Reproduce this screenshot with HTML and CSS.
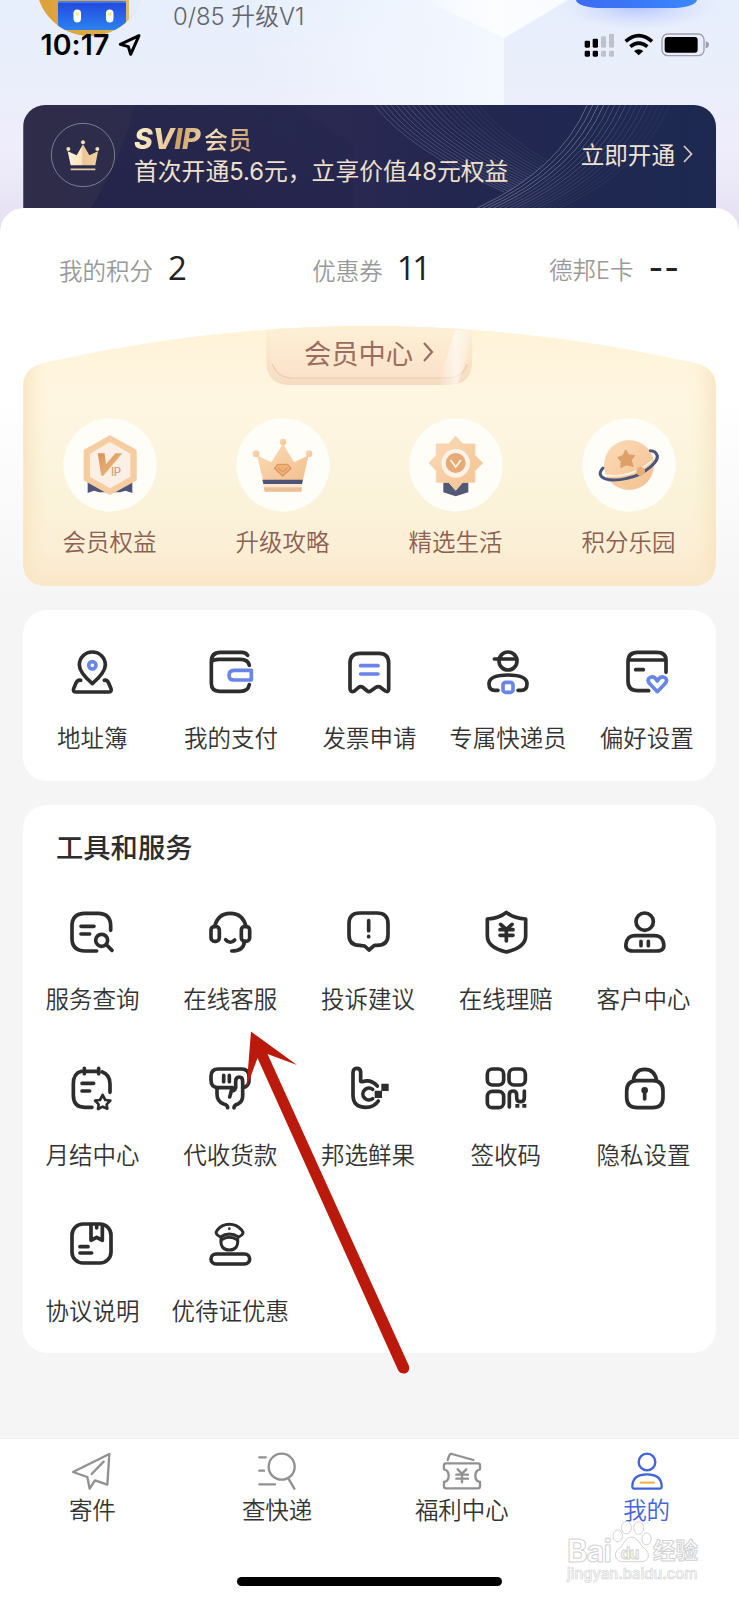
FILE: index.html
```html
<!DOCTYPE html>
<html lang="zh-CN">
<head>
<meta charset="utf-8">
<title>我的</title>
<link rel="stylesheet" href="styles.css">
</head>
<body>
<div class="page">
  <header class="header">
    <svg class="facets" viewBox="0 0 739 232" preserveAspectRatio="none">
      <defs>
        <linearGradient id="sky" x1="0" y1="0" x2="0" y2="1"><stop offset="0" stop-color="#e7effc"/><stop offset=".4" stop-color="#ebeefb"/><stop offset=".65" stop-color="#efedfb"/><stop offset="1" stop-color="#e4dff2"/></linearGradient>
        <linearGradient id="lightLeft" x1="0" y1="0" x2="1" y2="0"><stop offset="0" stop-color="#f4f8ff" stop-opacity="0"/><stop offset="1" stop-color="#f4f8ff"/></linearGradient>
        <linearGradient id="lightTop" x1="0" y1="0" x2="1" y2="0"><stop offset="0" stop-color="#fff" stop-opacity=".1"/><stop offset=".5" stop-color="#fcfdff"/><stop offset="1" stop-color="#f8fbff"/></linearGradient>
        <radialGradient id="glow"><stop offset="0" stop-color="#9db4ff" stop-opacity=".75"/><stop offset="1" stop-color="#c5ccff" stop-opacity="0"/></radialGradient>
      </defs>
      <path fill="url(#sky)" d="M0 0H739V232H0Z"/>
      <path fill="url(#lightLeft)" d="M250 0H504V110H250Z"/>
      <path fill="url(#lightTop)" d="M425 0H568L504 38Z"/>
      <ellipse cx="638" cy="6" rx="78" ry="24" fill="url(#glow)"/>
    </svg>
    <div class="profile">
      <svg class="avatar" width="108" height="36" viewBox="36 0 108 36">
        <defs>
          <clipPath id="round"><circle cx="90" cy="-18" r="54"/></clipPath>
          <linearGradient id="robot" x1="0" y1="0" x2="0" y2="1"><stop offset="0" stop-color="#2446df"/><stop offset="1" stop-color="#2d82ee"/></linearGradient>
          <linearGradient id="gold" x1="0" y1="0" x2="1" y2="0"><stop offset="0" stop-color="#dfa038"/><stop offset=".75" stop-color="#d8b04c"/><stop offset=".9" stop-color="#dfc178"/><stop offset="1" stop-color="#e5ebf5"/></linearGradient>
        </defs>
        <g clip-path="url(#round)">
          <path fill="url(#gold)" d="M36 0H144V36H36Z"/>
          <path fill="#e6ebf4" d="M129 0H144V26H129Z"/>
          <rect x="58" y="1" width="68" height="29" rx="2" fill="url(#robot)"/>
          <path stroke="#4d8cf5" stroke-width="1.5" d="M58 2H126"/>
          <rect x="73.500" y="9.500" width="7.500" height="13" rx="3.700" fill="#fff"/><rect x="106" y="9.500" width="7.500" height="13" rx="3.700" fill="#fff"/>
          <circle cx="77.500" cy="14" r="2" fill="#ffe98f"/><circle cx="110" cy="14" r="2" fill="#ffe98f"/>
        </g>
      </svg>
      <span class="level">0/85 升级V1</span>
      <span class="sign"></span>
    </div>
    <div class="statusbar">
      <span class="time">10:17</span>
      <svg class="loc" width="24" height="24" viewBox="354 97 72 72"><path d="M417 105L361 131L385 138L392 161Z" fill="none" stroke="#000" stroke-width="9" stroke-linejoin="round"/></svg>
      <svg class="signals" width="127" height="26" viewBox="642 94 381 78">
        <g><rect x="647" y="120" width="16" height="21" rx="4"/><rect x="671" y="114" width="16" height="27" rx="4"/><rect x="647" y="150" width="16" height="18" rx="4"/><rect x="671" y="150" width="16" height="18" rx="4"/></g>
        <g fill="#bfc2ca"><rect x="696" y="107" width="15" height="34" rx="4"/><rect x="720" y="99" width="15" height="42" rx="4"/><rect x="696" y="150" width="15" height="18" rx="4"/><rect x="720" y="150" width="15" height="18" rx="4"/></g>
        <g fill="none" stroke="#000" stroke-width="11"><path d="M770 122Q809 88 849 122"/><path d="M784 138Q809 117 835 138"/></g><path d="M795 151Q809 141 823 151L809 164Z"/>
        <rect x="879" y="100" width="126" height="65" rx="17" fill="none" stroke="#9da0aa" stroke-width="4"/><rect x="887" y="109" width="99" height="47" rx="9"/><path fill="#9da0aa" d="M1010 122Q1020 124 1020 132T1010 143Z"/>
      </svg>
    </div>
    <div class="banner">
      <svg class="banner-bg" viewBox="0 0 692.500 103">
        <defs>
          <linearGradient id="navy" x1="0" y1="0" x2="1" y2="0"><stop offset="0" stop-color="#2f2d49"/><stop offset=".5" stop-color="#282852"/><stop offset=".62" stop-color="#232750"/><stop offset="1" stop-color="#1d2951"/></linearGradient>
          <linearGradient id="shade" x1="0" y1="1" x2="1" y2="0"><stop offset="0" stop-color="#22224a" stop-opacity=".8"/><stop offset="1" stop-color="#24264f" stop-opacity=".4"/></linearGradient>
          <clipPath id="leftOf"><path d="M0 0H564Q536 65 454 103H0Z"/></clipPath>
          <path id="a" d="M351 0Q386 45 481 87" stroke-width="1" fill="none" stroke="#6f7796"/>
          <g id="a4"><use href="#a"/><use href="#a" x="5.500"/><use href="#a" x="11"/><use href="#a" x="16.500"/></g>
          <path id="b" d="M454 103Q536 65 564 0" stroke-width="1" fill="none" stroke="#7f88a3"/>
          <g id="b4"><use href="#b"/><use href="#b" x="5.500"/><use href="#b" x="11"/><use href="#b" x="16.500"/></g>
        </defs>
        <path fill="url(#navy)" d="M0 0H693V103H0Z"/>
        <path fill="url(#shade)" d="M68 103Q105 40 110 0H270L330 40V103Z"/>
        <g clip-path="url(#leftOf)"><use href="#a4" opacity=".5"/><use href="#a4" x="22" opacity=".5"/><use href="#a4" x="44" opacity=".42"/><use href="#a4" x="66" opacity=".32"/><use href="#a4" x="88" opacity=".2"/></g>
        <use href="#b4" opacity=".65"/><use href="#b4" x="22" opacity=".4"/><use href="#b4" x="44" opacity=".25"/><use href="#b4" x="66" opacity=".12"/>
      </svg>
      <svg class="medal" width="66" height="66" viewBox="150 370 198 198">
        <defs><linearGradient id="crownGold" x1="0" y1="0" x2="1" y2="0"><stop offset="0" stop-color="#fff1d8"/><stop offset=".45" stop-color="#fbe4c0"/><stop offset=".5" stop-color="#edc594"/><stop offset="1" stop-color="#f3d1a2"/></linearGradient></defs>
        <circle cx="249" cy="469" r="95" fill="#2d2d4b" stroke="#8b8ca0" stroke-width="2.500"/>
        <path fill="url(#crownGold)" d="M212 500L203 458L230 470L249 437L268 470L294 458L286 500Z"/>
        <g fill="#f6ddba"><circle cx="249" cy="431" r="6"/><circle cx="205" cy="451" r="6"/><circle cx="292" cy="451" r="6"/></g>
        <path stroke="#e6c9a4" stroke-width="5" d="M212 512H286"/>
      </svg>
      <div class="offer">
        <div class="offer-title"><b class="svip">SVIP</b><span class="member">会员</span></div>
        <div class="offer-text">首次开通5.6元，立享价值48元权益</div>
      </div>
      <div class="open">立即开通<svg width="12" height="20" viewBox="0 0 12 20"><path d="M2 2L9.500 10L2 18" fill="none" stroke="#d9cdc4" stroke-width="1.700"/></svg></div>
    </div>
  </header>

  <main class="sheet">
    <div class="stats">
      <div class="stat"><span>我的积分</span><b>2</b></div>
      <div class="stat coupons"><span>优惠券</span><b>11</b></div>
      <div class="stat"><span>德邦E卡</span><b class="dash">--</b></div>
    </div>

    <section class="vip">
      <svg class="vip-bg" viewBox="0 0 692.500 260">
        <defs>
          <linearGradient id="cream" x1="0" y1="0" x2="0" y2="1"><stop offset="0" stop-color="#fff3d8"/><stop offset=".3" stop-color="#fff6e2"/><stop offset=".65" stop-color="#faf3da"/><stop offset=".85" stop-color="#fbefd6"/><stop offset="1" stop-color="#fae6c8"/></linearGradient>
          <linearGradient id="edge" x1="0" y1="0" x2="1" y2="0"><stop offset="0" stop-color="#f8e5c2" stop-opacity=".9"/><stop offset=".035" stop-color="#fbeccd" stop-opacity="0"/><stop offset=".965" stop-color="#fbeccd" stop-opacity="0"/><stop offset="1" stop-color="#f8e5c2" stop-opacity=".9"/></linearGradient>
          <linearGradient id="tab" x1="0" y1="0" x2="0" y2="1"><stop offset="0" stop-color="#fdf0d6"/><stop offset="1" stop-color="#fae2c9"/></linearGradient>
          <linearGradient id="tabOuter" x1="0" y1="0" x2="0" y2="1"><stop offset="0" stop-color="#fdf0d5"/><stop offset="1" stop-color="#f6dcc0"/></linearGradient>
          <linearGradient id="shine" x1="0" y1="0" x2="1" y2="0"><stop offset="0" stop-color="#fff" stop-opacity="0"/><stop offset=".5" stop-color="#fff" stop-opacity=".6"/><stop offset="1" stop-color="#fff" stop-opacity="0"/></linearGradient>
        </defs>
        <path fill="url(#cream)" d="M0 60Q0 42 20 37Q346 -37 672 37Q692.500 42 692.500 60V236Q692.500 260 668 260H24Q0 260 0 236Z"/>
        <path fill="url(#edge)" d="M0 60Q0 42 20 37Q346 -37 672 37Q692.500 42 692.500 60V236Q692.500 260 668 260H24Q0 260 0 236Z"/>
        <path fill="url(#tabOuter)" d="M243 4Q346 -4 449 4V35Q449 59 425 59H267Q243 59 243 35Z"/>
        <path fill="url(#tab)" d="M247 4Q346 -4 446 4V30Q446 52 424 52H269Q247 52 247 30Z"/>
        <path fill="none" stroke="#eccbae" stroke-width="1.200" d="M249 38Q254 52 270 52H424Q440 52 444 38"/>
        <path fill="url(#shine)" d="M432 4H450L435 59H415Z"/>
      </svg>
      <div class="vip-title">会员中心<svg width="13" height="20" viewBox="0 0 13 20"><path d="M2 1L10 10L2 19" fill="none" stroke="#9c6c60" stroke-width="2.200"/></svg></div>
      <div class="vip-grid">
        <div class="vip-item"><svg width="94" height="94" viewBox="129 81 282 282">
          <defs><linearGradient id="peach" x1="0" y1="0" x2="1" y2="1"><stop offset="0" stop-color="#fbdcb8"/><stop offset="1" stop-color="#f4c08f"/></linearGradient><linearGradient id="amber" x1="0" y1="0" x2="1" y2="1"><stop offset="0" stop-color="#d9955b"/><stop offset="1" stop-color="#f3bd83"/></linearGradient></defs>
          <circle cx="270" cy="222" r="140" fill="#fffdf8"/>
          <path fill="#4d5478" d="M203 270H337V306L317 299L300 304H238L222 299L203 306Z"/>
          <path fill="#f6cda0" stroke="#f6cda0" stroke-width="8" stroke-linejoin="round" d="M270 137L346 179V266L270 308L195 266V179Z"/>
          <path fill="#fcefe5" d="M270 153L331 188V257L270 292L210 257V188Z"/>
          <path fill="url(#amber)" d="M233 187H254L258 220L286 187H307L250 254H244Z"/><text x="273" y="254" class="ip">IP</text>
        </svg><span>会员权益</span></div>
        <div class="vip-item"><svg width="94" height="94" viewBox="649 81 282 282">
          <circle cx="790" cy="222" r="140" fill="#fffdf8"/>
          <path fill="url(#peach)" d="M712 193L755 214L790 158L823 214L867 193L850 267H730Z"/>
          <g fill="url(#peach)"><circle cx="790" cy="153" r="10"/><circle cx="709" cy="188" r="10"/><circle cx="868" cy="188" r="10"/></g>
          <path fill="#4d5478" d="M728 266H850L847 279H731Z"/><path fill="#fbe7d2" d="M731 279H847L846 290H732Z"/><path fill="#efbd91" d="M732 289H846V302H735Z"/>
          <path fill="#f0b277" stroke="#d99a62" stroke-width="4" d="M774 220H804L814 232L789 255L765 232Z"/><path fill="none" stroke="#cf8c56" stroke-width="3" d="M776 231L789 243L803 231"/>
        </svg><span>升级攻略</span></div>
        <div class="vip-item"><svg width="94" height="94" viewBox="121 81 282 282">
          <circle cx="262" cy="222" r="140" fill="#fffdf8"/>
          <path fill="#525976" d="M224 268H299V304L261 316L224 304Z"/>
          <path fill="url(#peach)" stroke="#f8d4b0" stroke-width="3" stroke-linejoin="round" d="M261 136L282 159H319V193L342 216L319 239V274H282L261 298L240 274H203V239L181 216L203 193V159H240Z"/>
          <circle cx="261" cy="217" r="43" fill="#fdf2e5"/><circle cx="261" cy="216" r="30" fill="#e6ab79"/><path fill="none" stroke="#fff4df" stroke-width="5" d="M246 207L261 228L277 207"/>
        </svg><span>精选生活</span></div>
        <div class="vip-item"><svg width="94" height="94" viewBox="640 81 282 282">
          <circle cx="781" cy="222" r="140" fill="#fffdf8"/>
          <circle cx="781" cy="222" r="75" fill="url(#peach)"/>
          <path fill="none" stroke="#fff3e4" stroke-width="5" d="M712 253Q790 262 850 209"/>
          <path fill="none" stroke="#4d557c" stroke-width="9" stroke-linecap="round" d="M703 231C675 261 721 275 775 262C830 251 876 207 864 190Q860 180 845 179"/>
          <path fill="#df9f68" stroke="#df9f68" stroke-width="4" stroke-linejoin="round" d="M771 178L780 192L797 194L787 207L793 226L773 221L757 229L758 211L748 200L764 194Z"/>
          <circle cx="816" cy="241" r="13" fill="#e9ae78"/>
        </svg><span>积分乐园</span></div>
      </div>
    </section>

    <section class="card quick">
      <div class="grid">
        <div class="item"><svg width="46" height="46" viewBox="149 58 138 138"><path d="M219 162Q180 128 180 106A39 39 0 0 1 258 106Q258 128 219 162Z"/><path d="M184 152Q175 150 170 160L163 177Q159 187 171 187H267Q279 187 275 177L268 160Q263 150 255 152"/><circle class="blue" cx="219" cy="107" r="11"/></svg><span>地址簿</span></div>
        <div class="item"><svg width="46" height="46" viewBox="565 58 138 138"><path d="M684 77Q679 68 666 68H602Q575 68 575 96V161Q575 185 600 185H662Q685 185 689 165M689 107Q685 89 662 89H598Q580 89 575 97"/><path class="blue" d="M695 122H644Q628 122 628 137T644 151H695Z"/></svg><span>我的支付</span></div>
        <div class="item"><svg width="46" height="46" viewBox="20 58 138 138"><path d="M32 101Q32 71 62 71H119Q148 71 148 101V179Q147 189 138 184L122 172Q116 169 110 173L94 184Q89 188 84 184L69 172Q63 169 57 174L44 185Q33 189 32 177Z"/><path class="blue" d="M64 108H116M64 133H116"/></svg><span>发票申请</span></div>
        <div class="item"><svg width="46" height="46" viewBox="436 58 138 138"><circle cx="505" cy="94" r="27"/><path d="M464 88H531"/><path d="M475 182H466Q448 182 448 163C448 143 474 136 505 136C536 136 562 143 562 163Q562 182 544 182H535"/><rect class="blue" x="490" y="158" width="30" height="30" rx="8"/></svg><span>专属快递员</span></div>
        <div class="item"><svg width="46" height="46" viewBox="851 58 138 138"><path d="M977 128V91Q977 68 948 68H892Q863 68 863 96V154Q863 183 892 183H925M863 91H976M886 120H909"/><path class="blue" d="M951 186L929 163Q917 149 930 143Q942 138 951 154Q960 138 972 143Q985 149 973 163Z"/></svg><span>偏好设置</span></div>
      </div>
    </section>

    <section class="card tools">
      <h2>工具和服务</h2>
      <div class="grid">
        <div class="item"><svg width="46" height="46" viewBox="149 268 138 138"><path d="M274 332V319Q274 281 236 281H197Q158 281 158 319V356Q158 394 197 394H232M185 320H224M185 343H211M262 376L278 392"/><circle cx="247" cy="362" r="18"/></svg><span>服务查询</span></div>
        <div class="item"><svg width="46" height="46" viewBox="562 268 138 138"><rect x="574" y="320" width="25" height="45" rx="11"/><rect x="665" y="320" width="25" height="45" rx="11"/><path d="M585 321Q594 281 632 281T679 321M674 364Q674 394 636 394M618 360Q632 375 645 361"/></svg><span>在线客服</span></div>
        <div class="item"><svg width="46" height="46" viewBox="16 88 138 138"><path d="M60 100H112Q145 100 145 132V165Q145 197 112 197H104L88 211L75 199L60 197Q28 197 28 165V132Q28 100 60 100ZM87 123V153M87 170V171"/></svg><span>投诉建议</span></div>
        <div class="item"><svg width="46" height="46" viewBox="429 88 138 138"><path d="M499 98Q520 116 557 118V169Q557 203 499 217Q442 203 442 169V118Q478 116 499 98Z"/><path d="M482 134L499 149L516 134M499 149V184M480 150H519M480 167H519"/></svg><span>在线理赔</span></div>
        <div class="item"><svg width="46" height="46" viewBox="843 88 138 138"><circle cx="914" cy="126" r="26"/><path d="M885 168H944Q963 168 969 184Q979 214 950 214H879Q850 214 860 184Q866 168 885 168ZM903 185V198M925 185V198"/></svg><span>客户中心</span></div>

        <div class="item"><svg width="46" height="46" viewBox="149 736 138 138"><path d="M195 746V762M238 746V762M186 755Q162 761 162 793V827Q162 863 196 863H218M197 755H236M249 757Q272 765 272 793V818M188 791H223M188 814H211"/><path d="M250 826L258 841L273 843L262 854L264 867L250 861L236 868L238 854L227 843L242 841Z" stroke-width="8"/></svg><span>月结中心</span></div>
        <div class="item"><svg width="46" height="46" viewBox="562 736 138 138"><path d="M638 804H596Q574 804 574 782V770Q574 748 596 748H666Q688 748 688 772V784Q688 796 676 802M612 767V786M629 767V786"/><path d="M592 806V823Q592 846 612 853Q624 856 624 864M638 804L630 832M648 804V785Q648 772 659 772Q669 772 669 785V830Q669 847 653 854Q643 857 643 865M634 815Q651 812 648 799"/></svg><span>代收货款</span></div>
        <div class="item"><svg width="46" height="46" viewBox="16 556 138 138"><path d="M113 619Q94 597 68 606L63 605V578Q63 566 51 566Q40 566 40 580V646Q40 683 79 683Q103 683 116 664M99 629A18 18 0 1 0 99 657"/><path class="solid" d="M105 633H127V655H105ZM125 612H147V634H125Z"/></svg><span>邦选鲜果</span></div>
        <div class="item"><svg width="46" height="46" viewBox="429 556 138 138"><rect x="442" y="568" width="49" height="48" rx="15"/><rect x="507" y="568" width="49" height="48" rx="15"/><rect x="442" y="635" width="49" height="49" rx="15"/><path d="M508 682V646Q508 634 519 634Q530 634 530 646V654Q530 666 541 666Q553 666 553 654V634"/><path class="solid" d="M526 673H538V684H526ZM547 673H559V684H547Z"/></svg><span>签收码</span></div>
        <div class="item"><svg width="46" height="46" viewBox="843 556 138 138"><path d="M880 603Q884 569 914 569T950 603M892 603H938Q969 603 969 634V653Q969 684 938 684H892Q860 684 860 653V634Q860 603 892 603ZM914 634V658"/><circle class="solid" cx="914" cy="632" r="10"/></svg><span>隐私设置</span></div>

        <div class="item"><svg width="46" height="46" viewBox="149 124 138 138"><rect x="158" y="133" width="117" height="117" rx="33"/><path d="M215 136V182L232 173L249 182V138M232 136V145M182 201H206M182 220H217"/></svg><span>协议说明</span></div>
        <div class="item"><svg width="46" height="46" viewBox="562 124 138 138"><rect x="574" y="223" width="116" height="30" rx="15"/><path d="M604 178Q601 211 629 211T654 178M602 172Q583 163 593 151Q607 134 629 134T666 151Q677 163 657 172Q629 154 602 172ZM606 180Q629 166 652 180" stroke-width="9"/><circle class="solid" cx="629" cy="147" r="4"/></svg><span>优待证优惠</span></div>
      </div>
    </section>
  </main>

  <nav class="tabbar">
    <div class="tab"><svg width="42" height="42" viewBox="214 61 126 126"><path d="M329 73L220 127L263 142L270 177L286 152L323 165ZM276 133L312 96"/></svg><span>寄件</span></div>
    <div class="tab"><svg width="42" height="42" viewBox="768 61 126 126"><circle cx="845" cy="111" r="39"/><path d="M865 146L883 177M778 83H797M778 123H792M778 164H825"/></svg><span>查快递</span></div>
    <div class="tab"><svg width="42" height="42" viewBox="215 61 126 126"><path d="M235 91L240 77Q242 72 248 73L312 91M230 101H326Q332 101 332 107V119Q318 122 318 138T332 157V170Q332 176 326 176H230Q224 176 224 170V157Q238 154 238 138T224 119V107Q224 101 230 101ZM265 119L278 132L291 119M278 132V158M261 135H296M261 147H296"/></svg><span>福利中心</span></div>
    <div class="tab active"><svg width="42" height="42" viewBox="769 61 126 126"><circle cx="832" cy="97" r="25"/><path d="M794 177Q787 177 788 168Q790 134 832 134T876 168Q877 177 870 177Z"/><path d="M813 159H852" stroke="#f1b654"/></svg><span>我的</span></div>
  </nav>
  <div class="home"></div>

  <div class="watermark">
    <div class="mark"><span class="bai">Bai</span><svg width="40" height="45" viewBox="728 270 120 136"><g><ellipse cx="745" cy="318" rx="14" ry="18"/><ellipse cx="771" cy="293" rx="15" ry="19"/><ellipse cx="808" cy="294" rx="15" ry="19"/><ellipse cx="832" cy="327" rx="14" ry="18"/><path d="M787 322C766 322 765 345 748 357C729 372 739 396 760 396H816C840 396 845 371 826 356C810 344 807 322 787 322Z"/></g><text x="754" y="387">du</text></svg><span class="jy">经验</span></div>
    <div class="site">jingyan.baidu.com</div>
  </div>
  <svg class="pointer" width="170" height="350" viewBox="240 1026 170 350"><path fill="#bb190c" d="M251 1031.500L297 1065L267.500 1054L409 1366Q410 1372 405 1373.500Q400 1374 398 1370L257.500 1058L246.500 1088Z"/></svg>
</div>
</body>
</html>
```
FILE: styles.css
```css
* { box-sizing: border-box; }
body { margin: 0; font-family: Inter, "Noto Sans CJK SC", sans-serif; font-weight: 350; color: #333; }
.page { position: relative; width: 739px; height: 1600px; overflow: hidden; display: flex; flex-direction: column; background: #f5f5f5; }
svg { flex: none; display: block; }

.header { position: relative; height: 208px; flex: none; display: flex; flex-direction: column; justify-content: space-between; }
.facets { position: absolute; left: 0; top: 0; width: 739px; height: 232px; }
.profile { position: relative; height: 36px; padding: 0 42px 0 36px; display: flex; align-items: flex-start; }
.level { margin-left: 29px; font-size: 23.8px; line-height: 33px; color: #60656e; white-space: nowrap; }
.sign { width: 121px; height: 8px; margin-left: auto; border-radius: 0 0 26px 26px / 0 0 8px 8px; background: linear-gradient(90deg, #3a6cf3, #3a86fb); }
.statusbar { position: absolute; left: 0; top: 31px; width: 739px; height: 27px; padding: 0 31px 0 40.5px; display: flex; align-items: center; }
.time { font-size: 28.5px; font-weight: 600; line-height: 27px; color: #000; letter-spacing: .1px; width: 77.5px; }
.signals { margin-left: auto; margin-right: -1.5px; }

.banner { position: relative; height: 103px; margin: 0 23px 0 23px; border-radius: 22px 22px 0 0; overflow: hidden; display: flex; padding: 16px 22px 0 27px; }
.banner-bg { position: absolute; left: 0; top: 0; width: 100%; height: 103px; }
.medal, .offer, .open { position: relative; }
.medal { margin-top: 1px; }
.offer { margin-left: 18px; white-space: nowrap; }
.offer-title { display: flex; align-items: center; height: 35px; color: transparent; background: linear-gradient(100deg, #fff0d0 0, #e8c58e 35%, #c99e63 36%, #f6dfb7 65%, #c99863 100%); background-clip: text; -webkit-background-clip: text; width: 118px; }
.svip { font-style: italic; font-weight: 800; font-size: 28.5px; letter-spacing: -.3px; width: 70px; }
.member { font-size: 24px; font-weight: 500; }
.offer-text { font-size: 23.8px; line-height: 32px; font-weight: 400; color: #eee0cb; }
.open { margin-left: auto; display: flex; align-items: center; gap: 7px; height: 66px; font-size: 23.6px; font-weight: 400; color: #efe3d4; white-space: nowrap; }

.sheet { position: relative; flex: 1; border-radius: 24px 24px 0 0; background: linear-gradient(#fff 0, #fff 190px, #f5f5f6 400px, #f5f5f5 100%); padding: 0 23px; }
.stats { height: 118px; padding: 41px 36px 0 36px; display: flex; justify-content: space-between; }
.stat { display: flex; align-items: baseline; gap: 15px; height: 38px; white-space: nowrap; font-size: 23.5px; line-height: 38px; color: #999; }
.stat b { font-family: "Open Sans"; font-weight: 400; font-size: 33px; color: #222; }
.coupons { margin-left: 4px; }
.coupons b { letter-spacing: -3.5px; margin-left: -1px; }
.stat .dash { font-family: Inter; font-weight: 500; font-size: 32px; letter-spacing: 1px; }

.vip { position: relative; height: 260px; }
.vip-bg { position: absolute; left: 0; top: 0; width: 100%; height: 260px; }
.vip-title { position: relative; height: 52px; display: flex; align-items: center; justify-content: center; gap: 9px; font-size: 27.3px; font-weight: 400; color: #9c6c60; }
.vip-grid { position: relative; display: grid; grid-template-columns: repeat(4, 173px); margin-top: 40px; }
.vip-item { display: flex; flex-direction: column; align-items: center; gap: 19px; font-size: 23.5px; line-height: 24px; color: #8e5f53; white-space: nowrap; }
.ip { font: 500 34px Inter, sans-serif; fill: #d5a078; letter-spacing: -1px; }

.card { background: #fff; border-radius: 24px; }
.quick { margin-top: 24px; height: 171px; padding-top: 39px; }
.tools { margin-top: 24px; height: 548px; padding-top: 24px; }
.tools h2 { margin: 0 0 40px 33px; font-size: 27.3px; line-height: 40px; font-weight: 500; color: #2d2d2d; }
.grid { display: grid; grid-template-columns: repeat(5, 1fr); row-gap: 54px; }
.tools .grid { grid-template-columns: repeat(5, 137.8px); margin-left: 0.5px; }
.item { display: flex; flex-direction: column; align-items: center; gap: 32px; font-size: 23.5px; line-height: 24px; white-space: nowrap; color: #333; }
.tools .item { gap: 32.5px; }
.tools .grid { row-gap: 53.5px; }
.item svg { fill: none; stroke: #2d2d2d; stroke-width: 11; stroke-linecap: round; stroke-linejoin: round; }
.item .blue { stroke: #6885ea; }
.item .solid { fill: #2d2d2d; stroke: none; }

.tabbar { position: relative; height: 139px; flex: none; background: #fff; border-top: 1px solid #ececec; display: grid; grid-template-columns: repeat(4, 1fr); padding-top: 11px; }
.tab { display: flex; flex-direction: column; align-items: center; gap: 7px; font-size: 23.5px; line-height: 24px; color: #333; }
.tab svg { fill: none; stroke: #919191; stroke-width: 7; stroke-linecap: round; stroke-linejoin: round; }
.tab.active { color: #4263dc; }
.tab.active svg { stroke: #4263dc; }
.home { position: relative; height: 23px; flex: none; background: #fff; }
.home::before { content: ""; display: block; width: 265px; height: 9px; margin: 0 auto; border-radius: 5px; background: #000; }

.watermark { position: absolute; left: 567px; top: 1520px; width: 145px; font-weight: 700; color: #fff; -webkit-text-stroke: 1px #d2d2d2; }
.mark { display: flex; align-items: flex-start; height: 45px; }
.mark svg { fill: #fff; stroke: #d2d2d2; stroke-width: 3; }
.mark text { font: 700 46px Inter, sans-serif; letter-spacing: -2px; stroke-width: 3; -webkit-text-stroke: 0; }
.bai { font-size: 31px; line-height: 46px; padding-top: 8px; width: 45px; letter-spacing: -1px; }
.jy { font-size: 22.500px; line-height: 42px; padding-top: 10px; margin-left: 1px; }
.site { font-size: 14.8px; font-weight: 500; line-height: 18px; -webkit-text-stroke: .7px #d6d6d6; white-space: nowrap; }
.pointer { position: absolute; left: 240px; top: 1026px; }
```
